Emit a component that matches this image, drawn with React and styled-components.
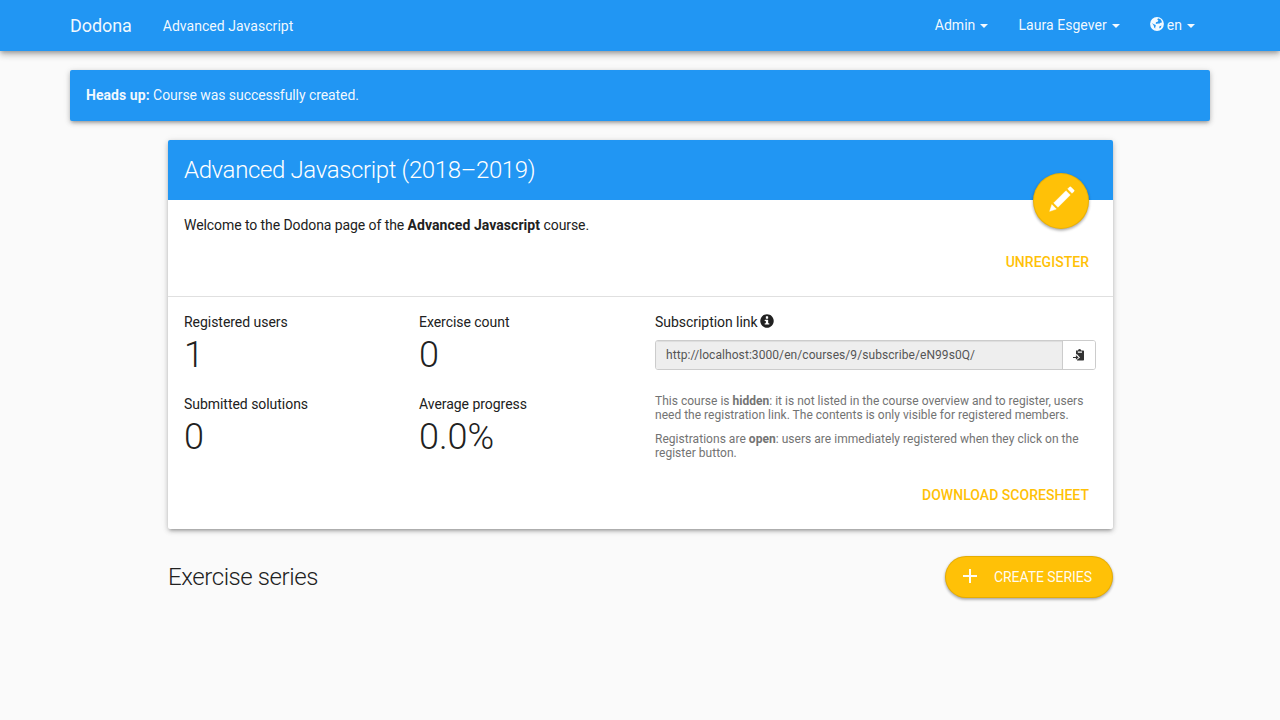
import React from "react";
import styled, { createGlobalStyle, css } from "styled-components";

const blue = "#2196f3";
const amber = "#ffc107";
const ink = "#212121";

const Global = createGlobalStyle`
  * { box-sizing: border-box; }
  body {
    margin: 0;
    min-height: 100vh;
    background: #fafafa;
    color: ${ink};
    font: 400 14px/20px Roboto, sans-serif;
  }
`;

const raised = css`
  box-shadow: 0 2px 5px 0 rgba(0, 0, 0, 0.22), 0 3px 3px -2px rgba(0, 0, 0, 0.22),
    0 1px 8px 0 rgba(0, 0, 0, 0.08);
`;
const raisedButton = css`
  box-shadow: 0 1px 3px 0 rgba(0, 0, 0, 0.24), 0 2px 3px 0 rgba(0, 0, 0, 0.16);
`;

const Navbar = styled.header`
  height: 51px;
  background: ${blue};
  box-shadow: 0 4px 6px 0 rgba(0, 0, 0, 0.16), 0 1px 10px 0 rgba(0, 0, 0, 0.16),
    0 2px 4px -1px rgba(0, 0, 0, 0.22);
`;
const NavInner = styled.div`
  display: flex;
  justify-content: space-between;
  width: 1140px;
  margin: 0 auto;
  color: rgba(255, 255, 255, 0.95);
`;
const NavGroup = styled.nav`
  display: flex;
`;
const Brand = styled.div`
  padding: 16px 31px 15px 0;
  font-size: 18px;
  letter-spacing: -0.08px;
`;
const Crumb = styled.div`
  padding: 16px 0 14px;
  letter-spacing: 0.04px;
`;
const NavItem = styled.div`
  display: flex;
  padding: 15px;
  letter-spacing: 0.05px;
`;
const Caret = styled.span`
  align-self: center;
  margin: 1px 0 0 5px;
  border-top: 4px solid;
  border-left: 4px solid transparent;
  border-right: 4px solid transparent;
`;

const Flash = styled.div`
  width: 1140px;
  height: 51px;
  margin: 19px auto;
  padding: 15px 16px;
  border-radius: 2px;
  background: ${blue};
  color: rgba(255, 255, 255, 0.95);
  letter-spacing: -0.07px;
  ${raised}

  strong {
    letter-spacing: 0.06px;
  }
`;

const Content = styled.main`
  width: 945px;
  margin: 0 167px 0 168px;
`;
const Card = styled.section`
  border-radius: 2px;
  background: #fff;
  ${raised}
`;
const CardTitle = styled.div`
  position: relative;
  height: 60px;
  padding: 14px 16px;
  border-radius: 2px 2px 0 0;
  background: ${blue};
`;
const Heading = styled.h2`
  margin: 0;
  font-size: 24px;
  line-height: 32px;
  font-weight: 300;
  letter-spacing: ${(p) => (p.$light ? "-0.36px" : "-0.42px")};
  color: ${(p) => (p.$light ? "#fff" : ink)};
`;
const Fab = styled.button`
  position: absolute;
  right: 24px;
  bottom: -29px;
  display: grid;
  place-items: center;
  width: 56px;
  height: 56px;
  padding: 0 0 4px 2px;
  border: 1px solid rgba(224, 168, 0, 0.6);
  border-radius: 50%;
  background: ${amber};
  color: #fff;
  ${raisedButton}
`;
const Welcome = styled.div`
  height: 97px;
  padding: 15px 16px 0;
  border-bottom: 1px solid #e0e0e0;
  letter-spacing: -0.08px;

  strong {
    letter-spacing: 0.06px;
  }
`;
const Actions = styled.div`
  display: flex;
  justify-content: flex-end;
  padding: ${(p) => p.$top}px 8px 0 0;
`;
const FlatButton = styled.a`
  color: ${amber};
  font-weight: 500;
  letter-spacing: 0.03px;
  text-transform: uppercase;
`;
const Details = styled.div`
  height: 232px;
  padding: 15px 16px 0;
`;
const Columns = styled.div`
  display: grid;
  grid-template-columns: 471px 441px;
  height: 163px;
`;
const Stats = styled.dl`
  display: grid;
  grid-template-columns: 235px 235px;
  grid-auto-rows: 82px;
  margin: 0;
`;
const Stat = styled.div``;
const Label = styled.dt`
  display: flex;
  align-items: flex-start;
  gap: 2px;
  height: 20px;
  letter-spacing: -0.04px;
`;
const Value = styled.dd`
  margin: 0;
  padding-top: 2px;
  font-size: 36px;
  line-height: 42px;
  font-weight: 300;
`;
const InputGroup = styled.div`
  display: flex;
  height: 30px;
  margin: 8px 0 24px;
  border: 1px solid #ccc;
  border-radius: 3px;
  overflow: hidden;
`;
const LinkField = styled.div`
  flex: 1;
  padding: 5px 10px;
  background: #eee;
  box-shadow: inset 0 1px 1px rgba(0, 0, 0, 0.075);
  color: #555;
  font-size: 12px;
  line-height: 18px;
  letter-spacing: 0.07px;
`;
const CopyButton = styled.button`
  display: grid;
  place-items: center;
  width: 33px;
  padding: 0;
  border: 0;
  border-left: 1px solid #ccc;
  background: #fff;
  color: #333;
`;
const Help = styled.p`
  margin: 0 0 10px;
  color: #737373;
  font-size: 12px;
  line-height: 14px;
  letter-spacing: ${(p) => p.$tracking}px;
`;
const SeriesBar = styled.div`
  display: flex;
  justify-content: space-between;
  align-items: flex-start;
  margin-top: 27px;

  h2 {
    padding-top: 5px;
  }
`;
const CreateButton = styled.button`
  display: flex;
  align-items: center;
  gap: 17px;
  width: 168px;
  height: 42px;
  padding: 0 0 0 17px;
  border: 1px solid rgba(224, 168, 0, 0.8);
  border-radius: 21px;
  background: ${amber};
  color: rgba(255, 255, 255, 0.95);
  font: 400 14px/20px Roboto, sans-serif;
  letter-spacing: -0.06px;
  white-space: nowrap;
  text-transform: uppercase;
  ${raisedButton}
`;
const Icon = styled.svg`
  display: block;
  flex: none;
  fill: currentColor;
  overflow: visible;
`;
const GlobeIcon = styled(Icon)`
  margin: 2px 3px 0 0;
`;
const PlusIcon = styled(Icon)`
  margin-bottom: 2px;
`;
const InfoMark = styled.span`
  padding-top: 2px;
`;

const Glyph = ({ size, d, weight = 0 }) => (
  <Icon width={size} height={size} viewBox="0 0 1200 1200">
    <path transform="matrix(1 0 0 -1 0 1200)" stroke="currentColor" strokeWidth={weight} d={d} />
  </Icon>
);

const PENCIL =
  "M1011 1210q19 0 33 -13l153 -153q13 -14 13 -33t-13 -33l-99 -92l-214 214l95 96q13 14 32 14zM1013 800l-615 -614l-214 214l614 614zM317 96l-333 -112l110 335z";
const INFO =
  "M600 1177q117 0 224 -45.5t184.5 -123t123 -184.5t45.5 -224t-45.5 -224t-123 -184.5t-184.5 -123t-224 -45.5t-224 45.5t-184.5 123t-123 184.5t-45.5 224t45.5 224t123 184.5t184.5 123t224 45.5zM675 1000h-150q-10 0 -17.5 -7.5t-7.5 -17.5v-150q0 -10 7.5 -17.5t17.5 -7.5h150q10 0 17.5 7.5t7.5 17.5v150q0 10 -7.5 17.5t-17.5 7.5zM675 700h-250q-10 0 -17.5 -7.5t-7.5 -17.5v-50q0 -10 7.5 -17.5t17.5 -7.5h75v-200h-75q-10 0 -17.5 -7.5t-7.5 -17.5v-50q0 -10 7.5 -17.5t17.5 -7.5h350q10 0 17.5 7.5t7.5 17.5v50q0 10 -7.5 17.5t-17.5 7.5h-75v275q0 10 -7.5 17.5t-17.5 7.5z";

export default function App() {
  return (
    <>
      <Global />
      <Navbar>
        <NavInner>
          <NavGroup>
            <Brand>Dodona</Brand>
            <Crumb>Advanced Javascript</Crumb>
          </NavGroup>
          <NavGroup>
            <NavItem>Admin<Caret /></NavItem>
            <NavItem>Laura Esgever<Caret /></NavItem>
            <NavItem>
              <GlobeIcon width="14" height="14" viewBox="0 0 14 14">
                <circle cx="7" cy="7" r="6.9" />
                <path
                  fill={blue}
                  d="M8 1.3 10.5 2.2l1.3 2-.4 1.8-1.4-.2-.9 1.2-1-.7-1.2.8-1.2-.6.3-1.3 1.6-.5.8-1.2-1.1-.8ZM2 6 3.8 7.2l1.6.6.5 1.2-.7 1 .1 1.6-1-.8-.5-2ZM9.3 9.4l2.2-.8-.6 1.9-1.5 1.1Z"
                />
              </GlobeIcon>
              en<Caret />
            </NavItem>
          </NavGroup>
        </NavInner>
      </Navbar>

      <Flash><strong>Heads up:</strong> Course was successfully created.</Flash>

      <Content>
        <Card>
          <CardTitle>
            <Heading $light>Advanced Javascript (2018–2019)</Heading>
            <Fab aria-label="Edit"><Glyph size={24} d={PENCIL} weight={24} /></Fab>
          </CardTitle>
          <Welcome>
            Welcome to the Dodona page of the <strong>Advanced Javascript</strong> course.
            <Actions $top={17}><FlatButton>Unregister</FlatButton></Actions>
          </Welcome>
          <Details>
            <Columns>
              <Stats>
                <Stat><Label>Registered users</Label><Value>1</Value></Stat>
                <Stat><Label>Exercise count</Label><Value>0</Value></Stat>
                <Stat><Label>Submitted solutions</Label><Value>0</Value></Stat>
                <Stat><Label>Average progress</Label><Value>0.0%</Value></Stat>
              </Stats>
              <div>
                <Label as="div">
                  Subscription link
                  <InfoMark><Glyph size={14} d={INFO} /></InfoMark>
                </Label>
                <InputGroup>
                  <LinkField>http://localhost:3000/en/courses/9/subscribe/eN99s0Q/</LinkField>
                  <CopyButton aria-label="Copy">
                    <Icon width="12" height="12" viewBox="0 0 12 12">
                      <path d="M3 1.6h2a1.6 1.6 0 0 1 3.2 0h2.1a.7.7 0 0 1 .7.7v8.5a.7.7 0 0 1-.7.7H4V10.8l3-2.4L4 5.3H3Zm1.8.9v1.2h4.2V2.5Z" fillRule="evenodd" />
                      <path d="M0 7.9h2.9V6L5.6 8.4l-2.7 2.4V8.9H0Z" />
                    </Icon>
                  </CopyButton>
                </InputGroup>
                <Help $tracking={0.015}>
                  This course is <strong>hidden</strong>: it is not listed in the course overview
                  and to register, users need the registration link. The contents is only visible
                  for registered members.
                </Help>
                <Help $tracking={0.035}>
                  Registrations are <strong>open</strong>: users are immediately registered when
                  they click on the register button.
                </Help>
              </div>
            </Columns>
            <Actions $top={10}><FlatButton>Download scoresheet</FlatButton></Actions>
          </Details>
        </Card>
        <SeriesBar>
          <Heading>Exercise series</Heading>
          <CreateButton>
            <PlusIcon width="14" height="14" viewBox="0 0 14 14">
              <path d="M6 0h2v6h6v2H8v6H6V8H0V6h6Z" />
            </PlusIcon>
            Create series
          </CreateButton>
        </SeriesBar>
      </Content>
    </>
  );
}
